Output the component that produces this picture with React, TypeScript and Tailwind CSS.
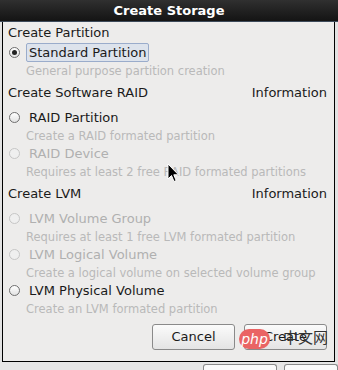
import React from "react";

function Radio({ checked, disabled }: { checked?: boolean; disabled?: boolean }) {
  return (
    <span
      className={
        "flex items-center justify-center w-[11px] h-[11px] rounded-full border shrink-0 " +
        (disabled
          ? "border-[#c6c6c6] bg-[#efefef]"
          : "border-[#6f6f6f] bg-gradient-to-b from-[#ffffff] to-[#e2e2e2]")
      }
    >
      {checked && <span className="w-[5px] h-[5px] rounded-full bg-[#222222]" />}
    </span>
  );
}

function Option({
  label,
  desc,
  checked,
  disabled,
  selected,
}: {
  label: string;
  desc: string;
  checked?: boolean;
  disabled?: boolean;
  selected?: boolean;
}) {
  return (
    <div className="flex flex-col">
      <div className="h-[19px] flex items-center pl-[1px]">
        <Radio checked={checked} disabled={disabled} />
        <span
          className={
            "ml-[6px] h-[19px] flex items-center px-[2px] rounded-[2px] border text-[13px] " +
            (selected ? "border-[#9aaccb] bg-[#dde3ec] " : "border-transparent ") +
            (disabled ? "text-[#b0b0b0]" : "text-[#1a1a1a]")
          }
        >
          {label}
        </span>
      </div>
      <div className="h-[17px] pt-[2px] leading-[15px] pl-[18px] text-[11.5px] text-[#b9b9b9] whitespace-nowrap">
        {desc}
      </div>
    </div>
  );
}

function Header({ title, info, first }: { title: string; info?: boolean; first?: boolean }) {
  return (
    <div
      className={
        "flex justify-between pr-[7px] text-[13px] text-[#1a1a1a] " +
        (first ? "h-[21px] pt-[2px] leading-[18px]" : "h-[29px] pt-[5px] leading-[17px]")
      }
    >
      <span>{title}</span>
      {info && <span>Information</span>}
    </div>
  );
}

export default function App() {
  return (
    <div
      className="relative w-[338px] h-[370px] overflow-hidden bg-[#e6e6e6] flex flex-col"
      style={{ fontFamily: '"DejaVu Sans", sans-serif' }}
    >
      {/* Title bar */}
      <div className="h-[22px] shrink-0 bg-gradient-to-b from-[#303030] to-[#141414] border-b border-[#3d4a5a] flex items-center justify-center text-white font-bold text-[13px] leading-[21px]">
        Create Storage
      </div>

      {/* Middle */}
      <div className="flex h-[340px] shrink-0">
        <div className="w-[2px] bg-[#e2e2e2]" />
        <div className="w-[333px] bg-[#edeceb] border-l border-r border-b border-black flex flex-col pl-[5px]">
          <Header title="Create Partition" first />
          <Option
            label="Standard Partition"
            desc="General purpose partition creation"
            checked
            selected
          />
          <Header title="Create Software RAID" info />
          <Option label="RAID Partition" desc="Create a RAID formated partition" />
          <Option
            label="RAID Device"
            desc="Requires at least 2 free RAID formated partitions"
            disabled
          />
          <Header title="Create LVM" info />
          <Option
            label="LVM Volume Group"
            desc="Requires at least 1 free LVM formated partition"
            disabled
          />
          <Option
            label="LVM Logical Volume"
            desc="Create a logical volume on selected volume group"
            disabled
          />
          <Option label="LVM Physical Volume" desc="Create an LVM formated partition" />
          <div className="flex justify-end gap-[9px] pr-[7px] mt-[7px]">
            <button className="w-[83px] h-[26px] rounded-[3px] border border-[#8a8a8a] bg-gradient-to-b from-[#fbfbfb] to-[#e4e4e4] text-[13px] text-[#1a1a1a]">
              Cancel
            </button>
            <button className="w-[83px] h-[26px] rounded-[3px] border border-[#8a8a8a] bg-gradient-to-b from-[#fbfbfb] to-[#e4e4e4] text-[13px] text-[#1a1a1a]">
              Create
            </button>
          </div>
        </div>
        <div className="w-[3px] bg-[#e2e2e2]" />
      </div>

      {/* Bottom strip with partial buttons behind */}
      <div className="flex-1 flex pt-[2px]">
        <div className="ml-[203px] w-[83px] rounded-t-[3px] border border-b-0 border-[#8a8a8a] bg-[#fafafa]" />
        <div className="ml-[7px] w-[60px] rounded-t-[3px] border border-b-0 border-[#8a8a8a] bg-[#fafafa]" />
      </div>

      {/* Mouse cursor */}
      <svg
        className="absolute left-[167px] top-[163px]"
        width="13"
        height="21"
        viewBox="0 0 13 21"
      >
        <path
          d="M1 1 L1 16 L4.5 12.5 L7 18.5 L9.2 17.6 L6.8 11.8 L11.5 11.8 Z"
          fill="#000"
          stroke="#fff"
          strokeWidth="1"
          strokeLinejoin="round"
        />
      </svg>

      {/* Watermark */}
      <div className="absolute left-[239px] top-[329px] w-[31px] h-[20px] rounded-full bg-[#ea6464] flex items-center justify-center text-white italic text-[14px] leading-[20px]">
        php
      </div>
      <div
        className="absolute left-[283px] top-[327px] text-[15px] leading-[20px] text-[#333333]"
        style={{ fontFamily: '"Noto Sans CJK SC", sans-serif' }}
      >
        中文网
      </div>
    </div>
  );
}
